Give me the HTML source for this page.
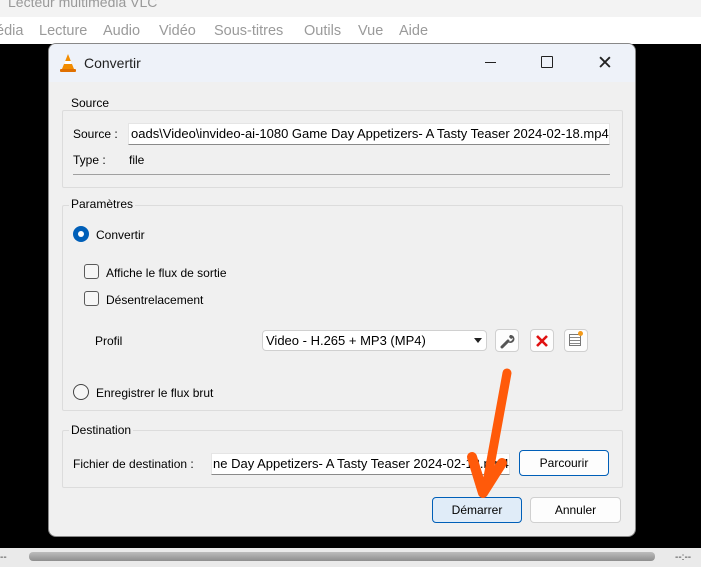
<!DOCTYPE html>
<html><head><meta charset="utf-8"><style>
*{margin:0;padding:0;box-sizing:border-box}
body{width:701px;height:567px;overflow:hidden;background:#000;font-family:"Liberation Sans",sans-serif;font-size:12px;color:#000;position:relative}
.a{position:absolute}
.m{position:absolute;top:23px;color:#9a9a9a;font-size:14.5px}
.gb{position:absolute;border:1px solid #dcdcdc;border-radius:2px}
.gl{position:absolute;background:#f0f0f0;padding:0 2px;font-size:12px}
.inp{position:absolute;background:#fff;border:1px solid #e5e5e5;border-bottom:1px solid #8a8a8a;overflow:hidden;white-space:nowrap;font-size:13px;line-height:20px;padding-left:2px}
.btn{position:absolute;background:#fdfdfd;border:1px solid #d0d0d0;border-radius:4px;text-align:center;font-size:12px}
.cb{position:absolute;width:15px;height:15px;border:1px solid #5a5a5a;border-radius:3px;background:#f6f6f6}
</style></head><body>
<div class="a" style="left:0;top:0;width:701px;height:17px;background:#f3f3f3"></div>
<div class="a" style="left:8px;top:-6px;color:#999;font-size:14px">Lecteur multimédia VLC</div>
<div class="a" style="left:0;top:17px;width:701px;height:27px;background:#fff"></div>
<div class="m" style="left:-4px">édia</div>
<div class="m" style="left:39px">Lecture</div>
<div class="m" style="left:103px">Audio</div>
<div class="m" style="left:159px">Vidéo</div>
<div class="m" style="left:214px">Sous-titres</div>
<div class="m" style="left:276px;left:304px">Outils</div>
<div class="m" style="left:358px">Vue</div>
<div class="m" style="left:399px">Aide</div>
<div class="a" style="left:0;top:548px;width:701px;height:19px;background:#eaeaea"></div>
<div class="a" style="left:29px;top:552px;width:626px;height:9px;background:linear-gradient(#bdbdbd,#8e8e8e);border-radius:4px"></div>
<div class="a" style="left:0;top:552px;color:#333;font-size:10px">--</div>
<div class="a" style="left:675px;top:552px;color:#333;font-size:10px">--:--</div>

<div class="a" style="left:48px;top:43px;width:588px;height:494px;background:#f0f0f0;border-radius:8px;border:1px solid #888;overflow:hidden">
<div class="a" style="left:0;top:0;width:588px;height:38px;background:#eef2f9"></div>
<svg class="a" style="left:10px;top:9px" width="18" height="20" viewBox="0 0 18 20"><path d="M9 1 L15 16 L3 16Z" fill="#f28c00"/><path d="M6 8h6l1 3H5z" fill="#fff"/><rect x="1" y="16" width="16" height="3" rx="1" fill="#e07000"/></svg>
<div class="a" style="left:35px;top:11px;font-size:14px;color:#222">Convertir</div>
<div class="a" style="left:436px;top:18px;width:11px;height:1px;background:#222"></div>
<div class="a" style="left:492px;top:12px;width:12px;height:12px;border:1.3px solid #222;border-radius:1px"></div>
<div class="a" style="left:548px;top:8px;font-size:19px;color:#222">✕</div>
</div>

<div class="gb" style="left:62px;top:110px;width:561px;height:78px"></div>
<div class="gl" style="left:69px;top:96px">Source</div>
<div class="a" style="left:73px;top:127px">Source :</div>
<div class="inp" style="left:128px;top:123px;width:482px;height:22px">oads\Video\invideo-ai-1080 Game Day Appetizers- A Tasty Teaser 2024-02-18.mp4</div>
<div class="a" style="left:73px;top:153px">Type :</div>
<div class="a" style="left:129px;top:153px">file</div>
<div class="a" style="left:73px;top:174px;width:537px;height:1px;background:#a0a0a0"></div>

<div class="gb" style="left:62px;top:205px;width:561px;height:206px"></div>
<div class="gl" style="left:69px;top:197px">Paramètres</div>
<div class="a" style="left:73px;top:226px;width:16px;height:16px;border-radius:50%;background:#005fb8"></div>
<div class="a" style="left:78px;top:231px;width:6px;height:6px;border-radius:50%;background:#fff"></div>
<div class="a" style="left:96px;top:228px">Convertir</div>
<div class="cb" style="left:84px;top:264px"></div>
<div class="a" style="left:106px;top:266px">Affiche le flux de sortie</div>
<div class="cb" style="left:84px;top:291px"></div>
<div class="a" style="left:106px;top:293px">Désentrelacement</div>
<div class="a" style="left:95px;top:334px">Profil</div>
<div class="btn" style="left:262px;top:330px;width:225px;height:21px;text-align:left;padding-left:3px;line-height:19px;background:#fff;font-size:13px">Video - H.265 + MP3 (MP4)</div>
<div class="a" style="left:474px;top:338px;width:0;height:0;border-left:4px solid transparent;border-right:4px solid transparent;border-top:5px solid #222"></div>
<div class="btn" style="left:495px;top:329px;width:24px;height:23px"></div>
<svg class="a" style="left:499px;top:333px" width="16" height="16" viewBox="0 0 16 16"><path d="M3 14 L9 8" stroke="#555" stroke-width="3" stroke-linecap="round"/><path d="M8 8 a4 4 0 1 0 3-6 l-1 2 2 2 2-1 a4 4 0 0 1-6 3" fill="#555"/></svg>
<div class="btn" style="left:530px;top:329px;width:24px;height:23px"></div>
<svg class="a" style="left:535px;top:334px" width="14" height="14"><path d="M2 2L12 12M12 2L2 12" stroke="#e01010" stroke-width="2.6"/></svg>
<div class="btn" style="left:564px;top:329px;width:24px;height:23px"></div>
<div class="a" style="left:569px;top:334px;width:12px;height:12px;border:1px solid #777;background:repeating-linear-gradient(#fff 0 2px,#888 2px 3px)"></div>
<div class="a" style="left:578px;top:331px;width:5px;height:5px;border-radius:50%;background:#f39a1a"></div>
<div class="a" style="left:73px;top:384px;width:16px;height:16px;border-radius:50%;border:1px solid #444;background:#f6f6f6"></div>
<div class="a" style="left:96px;top:386px">Enregistrer le flux brut</div>

<div class="gb" style="left:62px;top:430px;width:561px;height:58px"></div>
<div class="gl" style="left:69px;top:423px">Destination</div>
<div class="a" style="left:73px;top:457px">Fichier de destination :</div>
<div class="inp" style="left:211px;top:453px;width:299px;height:22px;padding-left:1px">ne Day Appetizers- A Tasty Teaser 2024-02-18.mp4</div>
<div class="btn" style="left:519px;top:450px;width:90px;height:26px;line-height:24px;border-color:#005fb8">Parcourir</div>
<div class="btn" style="left:432px;top:497px;width:90px;height:26px;line-height:24px;border-color:#005fb8;background:#e0ecf8">Démarrer</div>
<div class="btn" style="left:530px;top:497px;width:91px;height:26px;line-height:24px">Annuler</div>

<svg class="a" style="left:0;top:0" width="701" height="567"><path d="M507 373 L486 488" stroke="#ff5a0a" stroke-width="9" stroke-linecap="round" fill="none"/><path d="M472 457 L483 493 L502 463" stroke="#ff5a0a" stroke-width="10" stroke-linecap="round" stroke-linejoin="round" fill="none"/></svg>
</body></html>
